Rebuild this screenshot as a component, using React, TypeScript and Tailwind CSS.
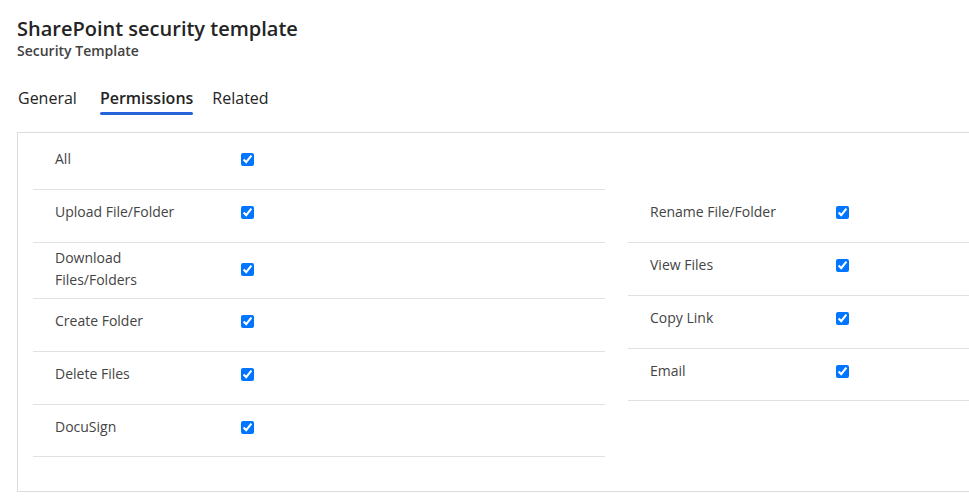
import React from "react";

type Row = { label: string[]; h: number; pt: number };

const leftRows: Row[] = [
  { label: ["All"], h: 53, pt: 11 },
  { label: ["Upload File/Folder"], h: 53, pt: 11 },
  { label: ["Download", "Files/Folders"], h: 56, pt: 4 },
  { label: ["Create Folder"], h: 53, pt: 11 },
  { label: ["Delete Files"], h: 53, pt: 11 },
  { label: ["DocuSign"], h: 52, pt: 11 },
];

const rightRows: Row[] = [
  { label: ["Rename File/Folder"], h: 53, pt: 11 },
  { label: ["View Files"], h: 53, pt: 11 },
  { label: ["Copy Link"], h: 53, pt: 11 },
  { label: ["Email"], h: 52, pt: 11 },
];

function PermRow({ row }: { row: Row }) {
  return (
    <div
      className="box-border border-b border-[#e1e1e1]"
      style={{ height: row.h, paddingTop: row.pt }}
    >
      <div className="flex items-center">
        <div className="w-[208px] pl-[22px] text-[14px] leading-[22px] text-[#444444]">
          {row.label.map((l) => (
            <div key={l}>{l}</div>
          ))}
        </div>
        <input
          type="checkbox"
          checked
          readOnly
          className="m-0 h-[13px] w-[13px]"
        />
      </div>
    </div>
  );
}

export default function App() {
  return (
    <div
      className="w-[969px] h-[502px] overflow-hidden bg-white"
      style={{ fontFamily: '"Open Sans", "Noto Sans", sans-serif' }}
    >
      <div className="pl-[17px] pt-[15px]">
        <h1 className="text-[20px] font-semibold leading-[28px] text-[#242424]">
          SharePoint security template
        </h1>
        <div className="text-[14px] font-semibold leading-[16px] text-[#424242]">
          Security Template
        </div>
      </div>
      <div className="mt-[28px] flex pl-[18px] text-[16px] leading-[22px] text-[#242424]">
        <div className="flex flex-col">
          <span>General</span>
        </div>
        <div className="ml-[23px] flex flex-col items-stretch">
          <span className="font-semibold">Permissions</span>
          <div className="mt-[3px] h-[3px] rounded-full bg-[#2463d9]" />
        </div>
        <div className="ml-[19px] flex flex-col">
          <span>Related</span>
        </div>
      </div>
      <div className="ml-[17px] mt-[17px] box-border grid w-[1199px] grid-cols-[572px_572px] gap-x-[23px] border border-[#dcdcdc] px-[15px] pt-[4px] pb-[34px]">
        <div>
          {leftRows.map((r) => (
            <PermRow key={r.label.join()} row={r} />
          ))}
        </div>
        <div className="pt-[53px]">
          {rightRows.map((r) => (
            <PermRow key={r.label.join()} row={r} />
          ))}
        </div>
      </div>
    </div>
  );
}
